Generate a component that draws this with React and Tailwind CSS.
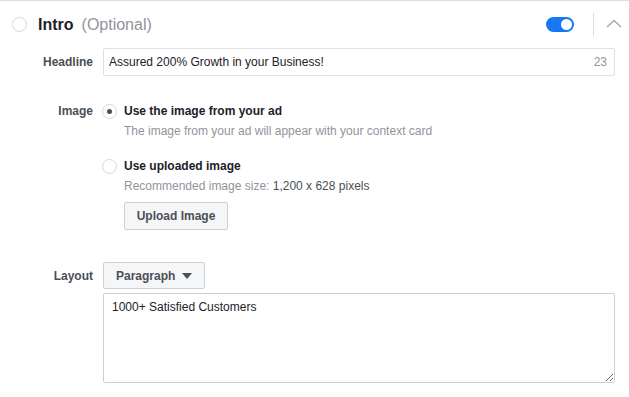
import React from "react"

function Radio({ checked }) {
  return (
    <div className="w-[15px] h-[15px] rounded-full border border-[#d4d7dc] bg-white flex items-center justify-center shrink-0">
      {checked && <div className="w-[5px] h-[5px] rounded-full bg-[#4b4f56]" />}
    </div>
  )
}

export default function App() {
  const font = { fontFamily: '"Liberation Sans", Arial, sans-serif' }

  return (
    <div className="w-[629px] h-[397px] bg-white border-t border-[#dadde1] overflow-hidden text-[#1d2129]" style={font}>
      {/* header */}
      <div className="h-[47px] flex items-center pl-3 pr-[7px]">
        <div className="w-[15px] h-[15px] rounded-full border border-[#d4d7dc]" />
        <div className="ml-[11px] text-[16px] font-bold text-[#1d2129]">Intro</div>
        <div className="ml-[8px] text-[16px] text-[#90949c]">(Optional)</div>
        <div className="flex-1" />
        <div className="w-[28px] h-[15px] rounded-full bg-[#1877f2] flex items-center justify-end pr-[2px]">
          <div className="w-[11px] h-[11px] rounded-full bg-white" />
        </div>
        <div className="w-px h-[23px] bg-[#dadde1] ml-[19px]" />
        <svg className="ml-[12px] mb-[3px]" width="16" height="9" viewBox="0 0 16 9" fill="none">
          <path d="M1 8 L8 1.5 L15 8" stroke="#a7abb1" strokeWidth="1.6" />
        </svg>
      </div>

      {/* headline */}
      <div className="flex items-center">
        <div className="w-[93px] text-right text-[12px] font-bold text-[#4b4f56]">Headline</div>
        <div className="ml-[10px] w-[512px] h-[28px] border border-[#dddfe2] rounded-[2px] flex items-center justify-between pl-[5px] pr-[7px] text-[12px]">
          <span>Assured 200% Growth in your Business!</span>
          <span className="text-[#90949c]">23</span>
        </div>
      </div>

      {/* image */}
      <div className="flex mt-[27px]">
        <div className="w-[93px] text-right text-[12px] font-bold text-[#4b4f56] leading-[16px]">Image</div>
        <div className="ml-[9px]">
          <div className="flex items-center h-[16px]">
            <Radio checked />
            <span className="ml-[7px] text-[12px] font-bold text-[#1d2129]">Use the image from your ad</span>
          </div>
          <div className="ml-[22px] mt-[4px] leading-[16px] text-[12px] text-[#90949c]">
            The image from your ad will appear with your context card
          </div>
          <div className="flex items-center h-[16px] mt-[19px]">
            <Radio />
            <span className="ml-[7px] text-[12px] font-bold text-[#1d2129]">Use uploaded image</span>
          </div>
          <div className="ml-[22px] mt-[4px] leading-[16px] text-[12px] text-[#90949c]">
            Recommended image size: <span className="text-[#4b4f56]">1,200 x 628 pixels</span>
          </div>
          <button className="ml-[22px] mt-[8px] w-[104px] h-[28px] border border-[#ccd0d5] rounded-[2px] bg-[#f5f6f7] text-[12px] font-bold text-[#4b4f56]">
            Upload Image
          </button>
        </div>
      </div>

      {/* layout */}
      <div className="flex mt-[32px]">
        <div className="w-[93px] h-[27px] flex items-center justify-end text-[12px] font-bold text-[#4b4f56]">Layout</div>
        <div className="ml-[10px]">
          <div className="w-[102px] h-[27px] border border-[#ccd0d5] rounded-[2px] bg-[#f5f6f7] flex items-center pl-[12px] text-[12px] font-bold text-[#4b4f56]">
            Paragraph
            <svg className="ml-[7px]" width="10" height="6" viewBox="0 0 10 6">
              <path d="M0 0 H10 L5 6 Z" fill="#4b4f56" />
            </svg>
          </div>
          <textarea
            className="block mt-[4px] w-[512px] h-[90px] border border-[#ccd0d5] rounded-[2px] px-[8px] py-[4px] text-[12px] text-[#1d2129] outline-none"
            style={font}
            defaultValue="1000+ Satisfied Customers"
          />
        </div>
      </div>
    </div>
  )
}
